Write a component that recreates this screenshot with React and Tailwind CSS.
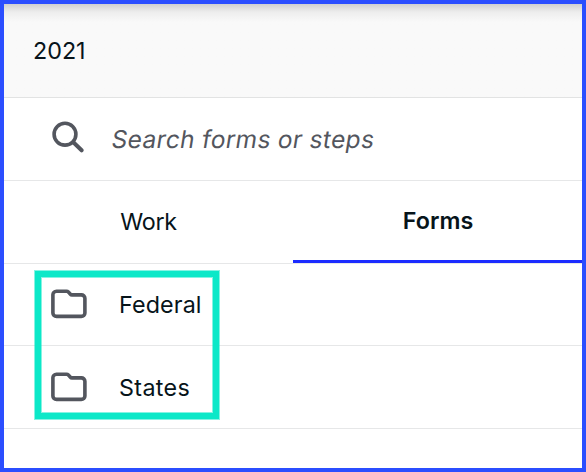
const FolderIcon = () => (
  <svg
    width="38"
    height="32"
    viewBox="0 0 38 32"
    fill="none"
    stroke="#53565e"
    strokeWidth="3.6"
    strokeLinejoin="round"
    className="relative -top-px shrink-0"
  >
    <path d="M6.5 3.3H16.6C17.3 3.3 17.9 3.6 18.4 4.1L20.2 6C20.7 6.6 21.3 6.9 22 6.9H31.3C33.3 6.9 34.9 8.4 34.9 10.3V25C34.9 26.9 33.3 28.4 31.3 28.4H6.5C4.5 28.4 2.9 26.9 2.9 25V6.8C2.9 4.9 4.5 3.3 6.5 3.3Z" />
  </svg>
);

const SearchIcon = () => (
  <svg
    width="34"
    height="34"
    viewBox="0 0 34 34"
    fill="none"
    stroke="#53565e"
    strokeLinecap="round"
    className="relative -top-px shrink-0"
  >
    <circle cx="15" cy="13.2" r="10.9" strokeWidth="3.6" />
    <path d="M23.3 21.2L31.6 29.3" strokeWidth="4" />
  </svg>
);

const FolderRow = ({ label, className }) => (
  <button
    type="button"
    className={`flex w-full shrink-0 items-center border-b border-[#e6e7e8] pl-[46px] text-left text-[23.3px] ${className}`}
  >
    <FolderIcon />
    <span className="ml-[31px] leading-8">{label}</span>
  </button>
);

export default function App() {
  return (
    <div className="relative flex h-[472px] w-[586px] flex-col overflow-hidden border-4 border-[#2b4eff] bg-white font-['Inter',sans-serif] text-[#07141a]">
      <header className="flex h-[94px] shrink-0 items-center border-b border-[#e2e3e3] bg-[#f9f9f9] bg-linear-to-b from-[#d0d0d0] via-[#ededed] via-[8px] to-[#f9f9f9] to-[18px] pl-[29px]">
        <h1 className="text-[23.3px] leading-8">2021</h1>
      </header>

      <div className="flex h-[83px] shrink-0 items-center border-b border-[#e6e7e8] pl-[46px]">
        <SearchIcon />
        <input
          type="text"
          aria-label="Search"
          placeholder="Search forms or steps"
          className="ml-7 w-96 -skew-x-[9deg] text-[24.5px] leading-8 tracking-[0.32px] outline-none placeholder:text-[#53565e]"
        />
      </div>

      <div className="flex h-[83px] shrink-0 border-b border-[#e6e7e8]">
        <button type="button" className="w-[289px] text-[23.3px] tracking-[-0.3px]">
          Work
        </button>
        <button
          type="button"
          className="flex-1 border-b-[3px] border-[#1b2bff] pt-[2px] pl-px text-[23.3px] font-semibold"
        >
          Forms
        </button>
      </div>

      <FolderRow label="Federal" className="h-[82px] tracking-[0.12px]" />
      <FolderRow label="States" className="h-[83px] pt-px tracking-[0.35px]" />

      {/* highlight around the folder list */}
      <div className="pointer-events-none absolute left-[31px] top-[267px] h-[148px] w-[184px] border-[6px] border-[#0ce8c8] shadow-[0_0_0_1px_#0ce8c880,inset_0_0_0_1px_#0ce8c880]" />
    </div>
  );
}
